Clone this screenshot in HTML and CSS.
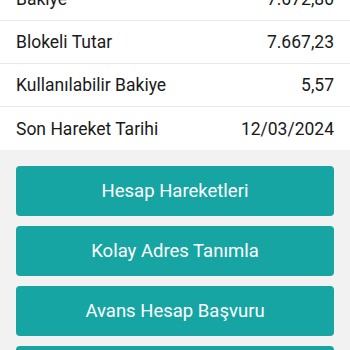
FILE: index.html
```html
<!DOCTYPE html>
<html lang="tr">
<head>
    <meta charset="UTF-8">
    <meta name="viewport" content="width=device-width, initial-scale=1.0">
    <title>Hesap Detayı</title>
    <link rel="stylesheet" href="styles.css">
</head>
<body>
    <div class="details">
        <div class="row"><span>Bakiye</span><span>7.672,80</span></div>
        <div class="row"><span>Blokeli Tutar</span><span>7.667,23</span></div>
        <div class="row"><span>Kullanılabilir Bakiye</span><span>5,57</span></div>
        <div class="row"><span>Son Hareket Tarihi</span><span>12/03/2024</span></div>
    </div>
    <div class="actions">
        <button class="btn">Hesap Hareketleri</button>
        <button class="btn">Kolay Adres Tanımla</button>
        <button class="btn">Avans Hesap Başvuru</button>
        <button class="btn">Hesap Kapatma</button>
    </div>
</body>
</html>
```

FILE: styles.css
```css
* {
    margin: 0;
    padding: 0;
    box-sizing: border-box;
    font-family: 'Roboto', sans-serif;
}
body {
    background: #f2f2f2;
    color: #1a1a1a;
}
.details {
    background: #fff;
    margin-top: -22px;
}
.row {
    display: flex;
    justify-content: space-between;
    align-items: center;
    height: 43px;
    padding: 0 16px;
    font-size: 17.5px;
    border-bottom: 1px solid #e9e9e9;
}
.row:last-child {
    border-bottom: none;
}
.actions {
    display: flex;
    flex-direction: column;
    gap: 10px;
    padding: 16px;
}
.btn {
    height: 50px;
    border: none;
    border-radius: 4px;
    background: #16a5a3;
    color: #fff;
    font-size: 18.5px;
}
```
